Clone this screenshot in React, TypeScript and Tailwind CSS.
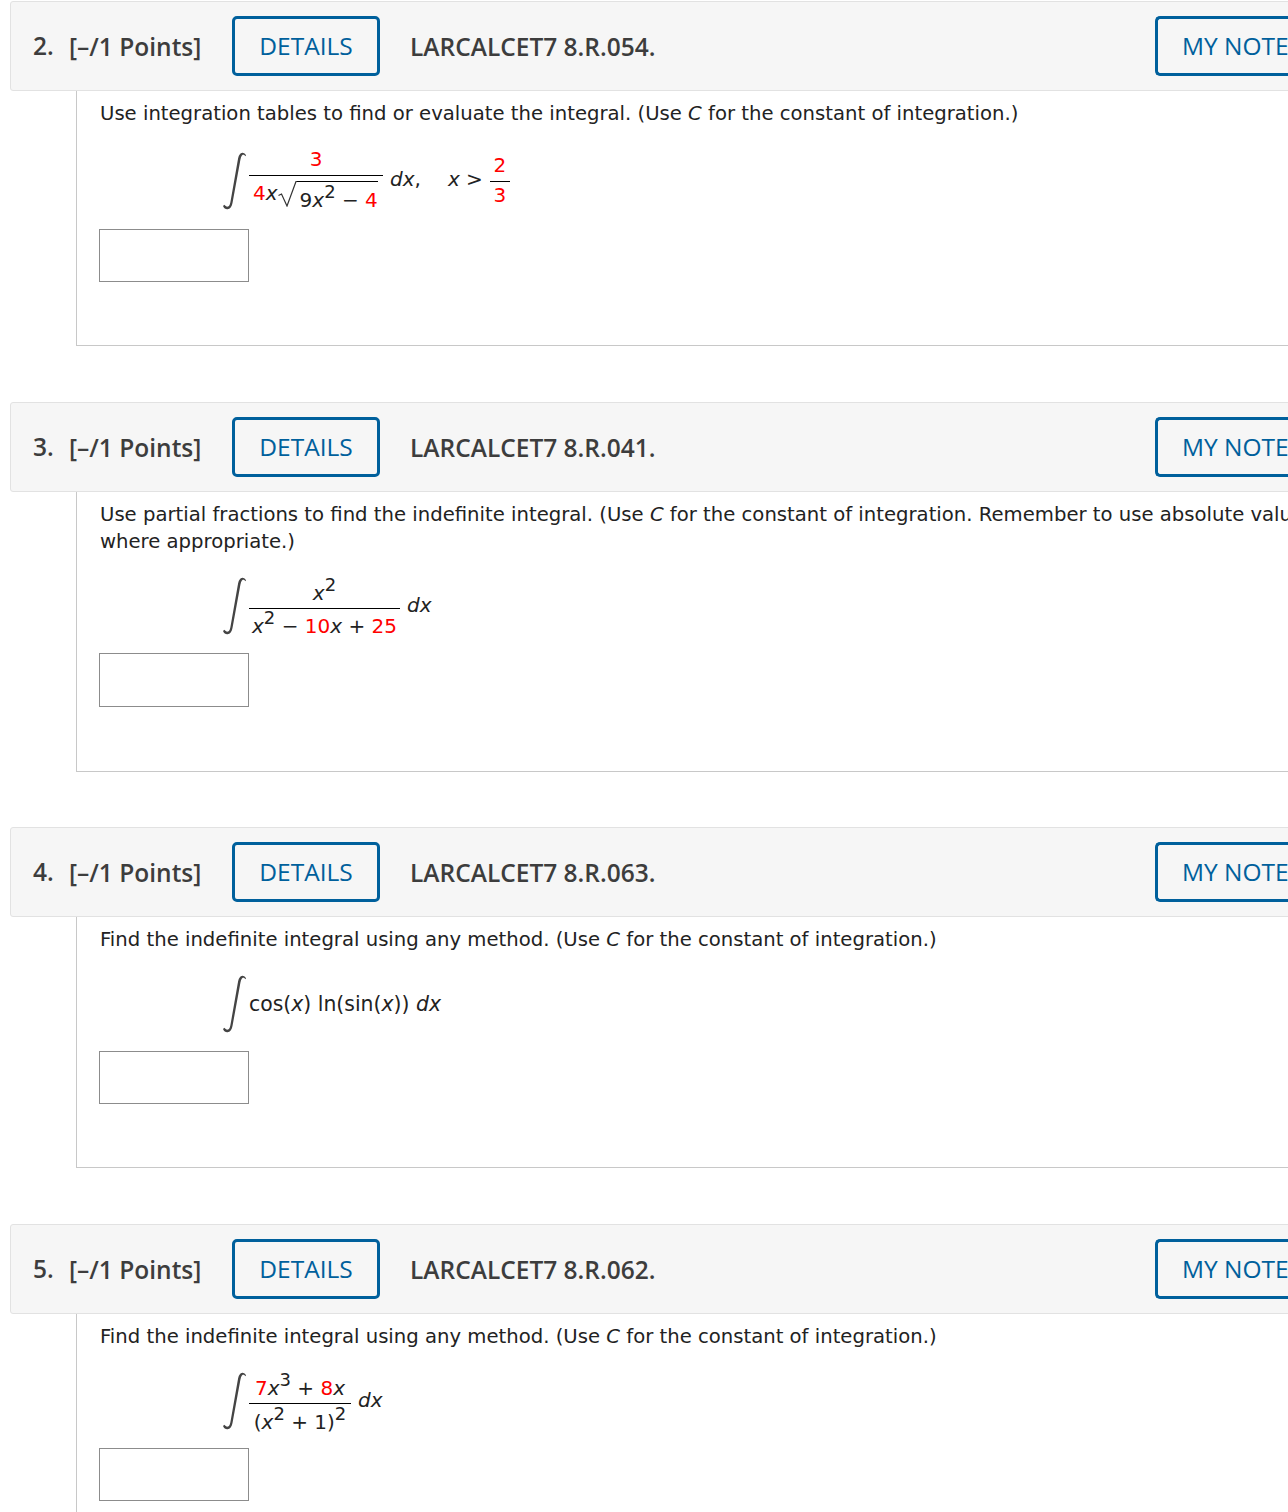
import type { ReactNode } from "react";

const R = ({ children }: { children: ReactNode }) => <span className="text-[#ff0000]">{children}</span>;
const I = ({ children }: { children: ReactNode }) => <i>{children}</i>;
const Sup = ({ children }: { children: ReactNode }) => (
  <sup className="relative -top-[9px] align-baseline text-[18px] leading-none">{children}</sup>
);

const Integral = () => (
  <svg width="26" height="58" viewBox="0 0 26 58" className="shrink-0">
    <path
      d="M24 3.5 C23 1 20.5 0 18.5 1.5 C17 2.8 16.3 5 15.8 8 L8.6 49 C8.2 52 7.4 54 6 54.6 C4.5 55 3.4 53.8 2.4 52.8 L1 54 C2 56.3 3.6 57.5 5.6 57.3 C8 57 9.8 55 10.6 50.5 L18 10 C18.6 6.5 19.2 3.8 20.4 3 C21.6 2.4 22.6 3.2 23.4 4.2 Z"
      fill="#444"
    />
  </svg>
);

const Radical = () => (
  <svg width="19" height="26" viewBox="0 0 19 26" className="shrink-0">
    <path d="M0.5 14.5 L3.5 13 L9 25 L18 0.5 L19 0.5" fill="none" stroke="#333" strokeWidth="1.2" />
  </svg>
);

const Frac = ({
  top,
  bottom,
  width,
  topClass,
  bottomClass,
}: {
  top: ReactNode;
  bottom: ReactNode;
  width: string;
  topClass: string;
  bottomClass: string;
}) => (
  <span className={`inline-flex flex-col items-center ${width}`}>
    <span className={`whitespace-nowrap leading-[26px] ${topClass}`}>{top}</span>
    <span className="h-px w-full shrink-0 bg-black" />
    <span className={`whitespace-nowrap leading-[26px] ${bottomClass}`}>{bottom}</span>
  </span>
);

const Question = ({
  num,
  code,
  bodyH,
  mb,
  inputClass,
  children,
}: {
  num: number;
  code: string;
  bodyH: string;
  mb: string;
  inputClass: string;
  children: ReactNode;
}) => (
  <div className={mb}>
    <div className="ml-[10px] flex h-[90px] w-[1290px] items-center rounded-[3px] border border-[#e2e2e2] bg-[#f6f6f6] font-['Open_Sans',sans-serif] text-[24.5px] font-semibold text-[#3d3d3d]">
      <span className="ml-[22px] w-[36px] shrink-0">{num}.</span>
      <span className="w-[163px] shrink-0 whitespace-nowrap pt-[2px]">[–/1 Points]</span>
      <button className="h-[60px] w-[148px] shrink-0 rounded-[5px] border-[3px] border-[#00609c] font-normal text-[#00609c]">
        DETAILS
      </button>
      <span className="ml-[30px] w-[745px] shrink-0 whitespace-nowrap pt-[2px]">{code}</span>
      <button className="h-[60px] w-[160px] shrink-0 overflow-hidden whitespace-nowrap rounded-l-[5px] border-y-[3px] border-l-[3px] border-[#00609c] pl-[24px] text-left font-normal text-[#00609c]">
        MY NOTES
      </button>
    </div>
    <div className={`ml-[76px] border-b border-l border-[#c8c8c8] pl-[22px] font-['DejaVu_Sans',Verdana,sans-serif] text-[20px] leading-[27px] text-[#222] ${bodyH}`}>
      {children}
      <div className={`w-[150px] border border-[#8c8c8c] bg-white ${inputClass}`} />
    </div>
  </div>
);

export default function App() {
  return (
    <div className="h-[1512px] w-[1288px] overflow-hidden bg-white pt-px">
      <Question num={2} code="LARCALCET7 8.R.054." bodyH="h-[255px]" mb="mb-[56px]" inputClass="mt-[14px] h-[53px]">
        <p className="whitespace-nowrap pl-px pt-[9px] text-[19.65px]">
          Use integration tables to find or evaluate the integral. (Use <I>C</I> for the constant of integration.)
        </p>
        <div className="ml-[123px] mt-[20px] flex h-[68px] items-center">
          <Integral />
          <Frac
            width="ml-px w-[134px]"
            topClass="pb-[3px]"
            bottomClass="h-[41px] w-full"
            top={<R>3</R>}
            bottom={
              <span className="flex pl-[4px] pt-[5px]">
                <span className="relative -top-[1px]">
                  <R>4</R>
                  <I>x</I>
                </span>
                <Radical />
                <span className="mr-[6px] flex-1 border-t border-black pl-[3px] pt-[5px]">
                  9<I>x</I>
                  <Sup>2</Sup> − <R>4</R>
                </span>
              </span>
            }
          />
          <span className="ml-[7px] whitespace-nowrap pb-[4px]">
            <I>dx</I>,
          </span>
          <span className="ml-[27px] whitespace-nowrap pb-[4px]">
            <I>x</I> &gt;
          </span>
          <Frac width="ml-[7px] w-[20px] pb-[3px]" topClass="pb-[3px] pt-px" bottomClass="" top={<R>2</R>} bottom={<R>3</R>} />
        </div>
      </Question>

      <Question num={3} code="LARCALCET7 8.R.041." bodyH="h-[280px]" mb="mb-[55px]" inputClass="mt-[13px] h-[54px]">
        <p className="whitespace-nowrap pl-px pt-[9px] text-[19.65px]">
          Use partial fractions to find the indefinite integral. (Use <I>C</I> for the constant of integration. Remember
          to use absolute values
          <br />
          where appropriate.)
        </p>
        <div className="ml-[123px] mt-[17px] flex h-[68px] items-center">
          <Integral />
          <Frac
            width="ml-px w-[151px]"
            topClass="pb-[2px] pt-[7px]"
            bottomClass="pt-[4px]"
            top={
              <>
                <I>x</I>
                <Sup>2</Sup>
              </>
            }
            bottom={
              <>
                <I>x</I>
                <Sup>2</Sup> − <R>10</R>
                <I>x</I> + <R>25</R>
              </>
            }
          />
          <span className="ml-[7px] pb-[2px]">
            <I>dx</I>
          </span>
        </div>
      </Question>

      <Question num={4} code="LARCALCET7 8.R.063." bodyH="h-[251px]" mb="mb-[56px]" inputClass="mt-[13px] h-[53px]">
        <p className="whitespace-nowrap pl-px pt-[9px] text-[19.65px]">
          Find the indefinite integral using any method. (Use <I>C</I> for the constant of integration.)
        </p>
        <div className="ml-[123px] mt-[17px] flex h-[68px] items-center">
          <Integral />
          <span className="ml-px whitespace-nowrap text-[20.4px]">
            cos(<I>x</I>) ln(sin(<I>x</I>)) <I>dx</I>
          </span>
        </div>
      </Question>

      <Question num={5} code="LARCALCET7 8.R.062." bodyH="h-[300px]" mb="" inputClass="mt-[13px] h-[53px]">
        <p className="whitespace-nowrap pl-px pt-[9px] text-[19.65px]">
          Find the indefinite integral using any method. (Use <I>C</I> for the constant of integration.)
        </p>
        <div className="ml-[123px] mt-[17px] flex h-[68px] items-center">
          <Integral />
          <Frac
            width="ml-px w-[102px]"
            topClass="pb-[2px] pt-[7px]"
            bottomClass="pt-[5px]"
            top={
              <>
                <R>7</R>
                <I>x</I>
                <Sup>3</Sup> + <R>8</R>
                <I>x</I>
              </>
            }
            bottom={
              <>
                (<I>x</I>
                <Sup>2</Sup> + 1)
                <Sup>2</Sup>
              </>
            }
          />
          <span className="ml-[7px] pb-[2px]">
            <I>dx</I>
          </span>
        </div>
      </Question>
    </div>
  );
}
